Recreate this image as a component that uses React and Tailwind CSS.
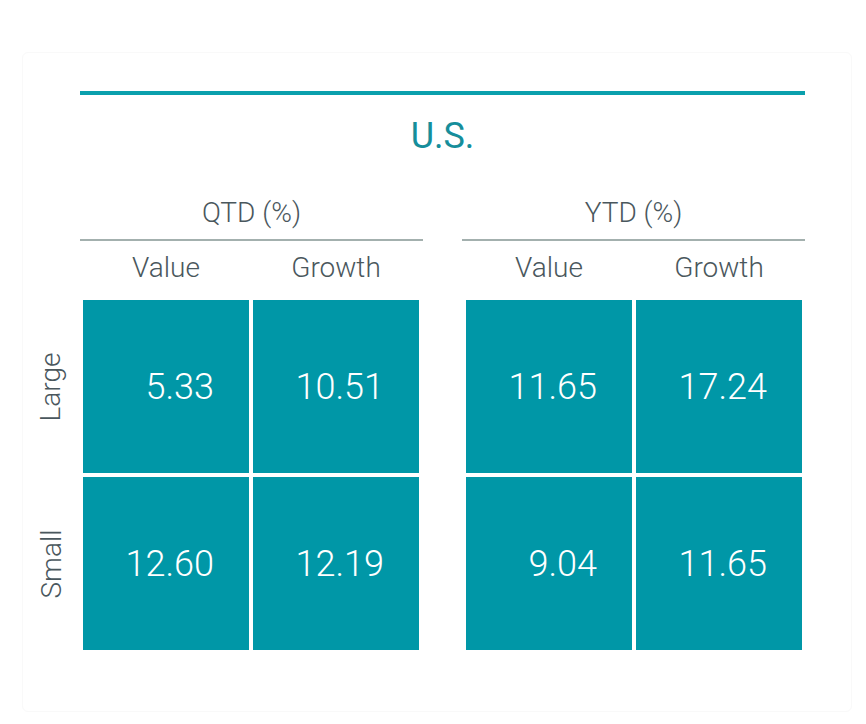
import React from "react";

const font = { fontFamily: "Roboto, 'Liberation Sans', sans-serif" };

const groups = [
  { title: "QTD (%)", values: [["5.33", "10.51"], ["12.60", "12.19"]] },
  { title: "YTD (%)", values: [["11.65", "17.24"], ["9.04", "11.65"]] },
];

const Cell = ({ value }) => (
  <div className="flex h-[173px] w-[166px] items-center justify-end bg-[#0097a7] pr-[35px] text-[36px] font-light leading-[40px] text-white">
    {value}
  </div>
);

const Grid = ({ values }) => (
  <div className="flex flex-col">
    {/* sub headers */}
    <div className="flex gap-[4px]">
      <div className="w-[166px] text-center text-[28px] font-light leading-[32px] text-[#4a575d]">Value</div>
      <div className="w-[166px] text-center text-[28px] font-light leading-[32px] text-[#4a575d]">Growth</div>
    </div>
    <div className="mt-[16px] flex flex-col gap-[4px]">
      {values.map((row, i) => (
        <div key={i} className="flex gap-[4px]">
          {row.map((v, j) => (
            <Cell key={j} value={v} />
          ))}
        </div>
      ))}
    </div>
  </div>
);

export default function App() {
  return (
    <div className="h-[724px] w-full overflow-hidden bg-white pt-[52px] pl-[22px]" style={font}>
      <div className="h-[660px] w-[830px] rounded-[6px] border border-[#f9f9f9] pt-[38px]">
        {/* Top heading */}
        <div className="ml-[57px] w-[725px]">
          <div className="h-[4px] bg-[#0aa0ad]" />
          <div className="mt-[19px] text-center text-[36px] leading-[44px] text-[#168e9b]">U.S.</div>
          <div className="mt-[39px] flex gap-[39px]">
            {groups.map((g) => (
              <div key={g.title} className="w-[343px]">
                <div className="text-center text-[28px] font-light leading-[32px] text-[#4a575d]">{g.title}</div>
                <div className="mt-[10px] h-[2px] bg-[#a3b0ae]" />
              </div>
            ))}
          </div>
        </div>

        {/* Body */}
        <div className="mt-[11px] flex">
          <div className="flex w-[56px] flex-col">
            <div className="h-[48px]" />
            <div className="flex h-[173px] items-center justify-center">
              <span className="-rotate-90 whitespace-nowrap text-[28px] font-light leading-[32px] text-[#4a575d]">Large</span>
            </div>
            <div className="mt-[4px] flex h-[173px] items-center justify-center">
              <span className="-rotate-90 whitespace-nowrap text-[28px] font-light leading-[32px] text-[#4a575d]">Small</span>
            </div>
          </div>
          <div className="ml-[4px]">
            <Grid values={groups[0].values} />
          </div>
          <div className="ml-[47px]">
            <Grid values={groups[1].values} />
          </div>
        </div>
      </div>
    </div>
  );
}
